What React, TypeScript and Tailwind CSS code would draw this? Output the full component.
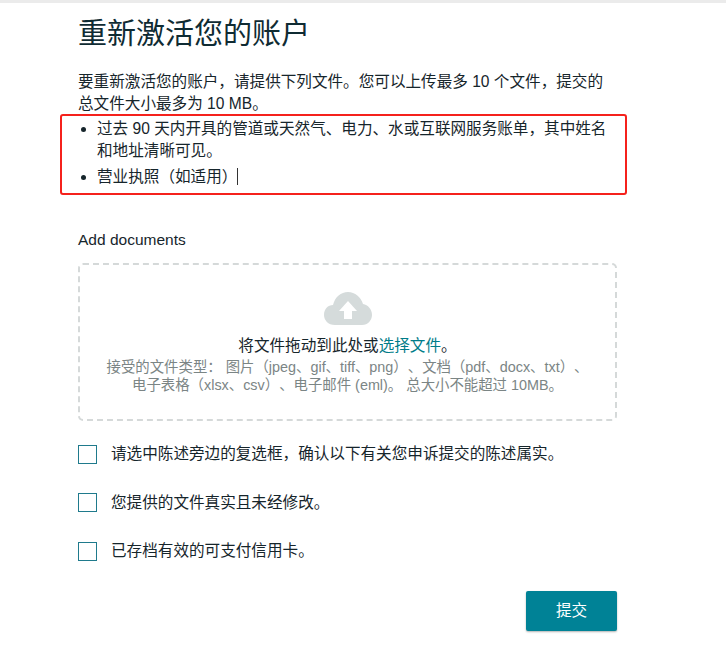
export default function App() {
  return (
    <div className="w-[726px] h-[652px] bg-white overflow-hidden font-['Liberation_Sans','Noto_Sans_CJK_SC',sans-serif] text-[#16191f] [text-spacing-trim:space-all]">
      <div className="h-[3px] bg-[#ebebeb]" />
      <div className="w-[539px] ml-[78px] relative">
        <h1 className="text-[29px] leading-[36px] mt-[13px] text-[#0f2b33] font-normal">重新激活您的账户</h1>
        <p className="text-[15.6px] leading-[22px] mt-[19px] text-[#16252b] w-[530px]">要重新激活您的账户，请提供下列文件。您可以上传最多 10 个文件，提交的总文件大小最多为 10 MB。</p>
        <div className="relative mt-[-1px]">
          <div className="absolute left-[-18px] top-[0px] w-[567px] h-[81px] border-[2.5px] border-[#f5211c] rounded-[3px]" />
          <ul className="list-disc pl-[19px] text-[15.6px] leading-[22px] text-[#16252b] pt-[4px] w-[530px]">
            <li>过去 90 天内开具的管道或天然气、电力、水或互联网服务账单，其中姓名和地址清晰可见。</li>
            <li className="mt-[4px]">营业执照（如适用）<span className="inline-block w-px h-[17px] bg-[#333] align-[-3px]" /></li>
          </ul>
        </div>
        <div className="mt-[42px] text-[15.5px] leading-[20px] text-[#16252b]">Add documents</div>
        <div className="mt-[13px] h-[158px] border-2 border-dashed border-[#d5d9d9] rounded-[5px] flex flex-col items-center pt-[27px]">
          <svg width="48" height="34" viewBox="0 0 48 34">
            <path d="M11 33 C4 33 0 28 0 23 C0 17 4 13 9 13 C11 5 17 0 24 0 C31 0 37 5 39 12 C44 13 48 17 48 23 C48 28 44 33 38 33 Z" fill="#d5dbdb" />
            <path d="M24 9 L33 19 L28 19 L28 27 L20 27 L20 19 L15 19 Z" fill="#ffffff" />
          </svg>
          <div className="text-[15.6px] leading-[22px] mt-[9px] text-[#16252b]">将文件拖动到此处或<span className="text-[#007c89]">选择文件</span>。</div>
          <div className="text-[14.4px] leading-[18px] mt-[1px] text-[#7b8585] text-center whitespace-nowrap">接受的文件类型： 图片（jpeg、gif、tiff、png）、文档（pdf、docx、txt）、<br />电子表格（xlsx、csv）、电子邮件 (eml)。 总大小不能超过 10MB。</div>
        </div>
        <div className="mt-[23px] flex flex-col gap-[28.5px]">
          {["请选中陈述旁边的复选框，确认以下有关您申诉提交的陈述属实。","您提供的文件真实且未经修改。","已存档有效的可支付信用卡。"].map((t) => (
            <div key={t} className="flex items-center gap-[14px] h-[20px]">
              <span className="w-[19px] h-[19px] border border-[#1f7a8c] shrink-0" />
              <span className="text-[15.6px] leading-[20px] text-[#16252b]">{t}</span>
            </div>
          ))}
        </div>
        <div className="flex justify-end mt-[30px]">
          <button className="w-[91px] h-[40px] bg-[#008296] text-white text-[15.6px] rounded-[2px] shadow-[0_1px_2px_rgba(0,0,0,0.3)]">提交</button>
        </div>
      </div>
    </div>
  );
}
